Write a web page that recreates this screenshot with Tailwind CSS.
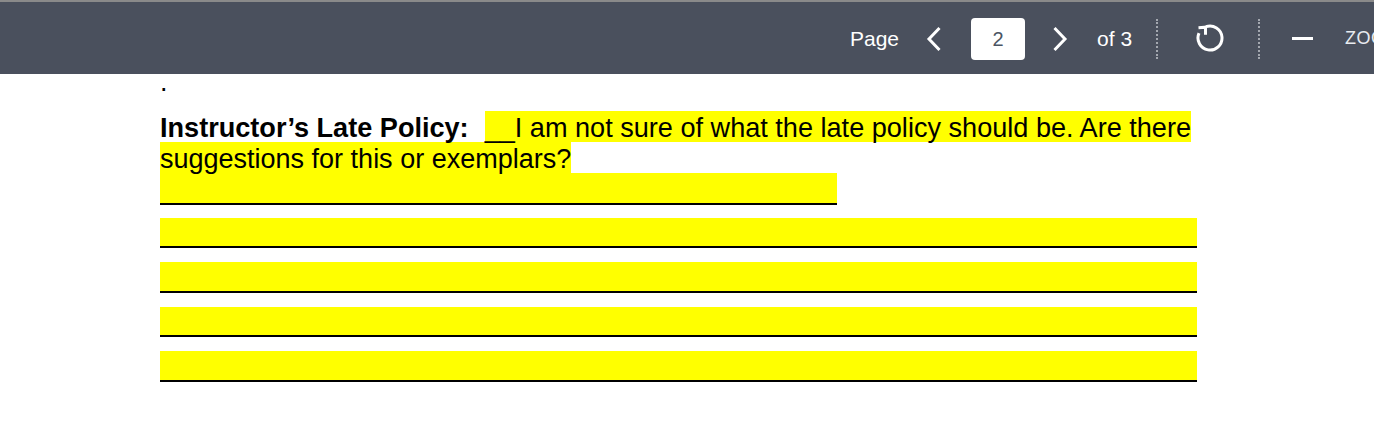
<!DOCTYPE html>
<html>
<head>
<meta charset="utf-8">
<script src="https://cdn.jsdelivr.net/npm/@tailwindcss/browser@4"></script>
</head>
<body class="bg-white w-[1374px] h-[423px] overflow-hidden font-['Liberation_Sans',Arial,sans-serif]">
<header class="h-[74px] bg-[#4a505d] border-t-[2px] border-[#8a8a8a] flex items-center pt-[1px] pl-[850px] text-white overflow-hidden whitespace-nowrap text-[21px]">
  <span class="shrink-0">Page</span>
  <svg class="shrink-0 ml-[27px] w-[16px] h-[26px]" viewBox="0 0 16 26" fill="none" stroke="#fff" stroke-width="3"><path d="M13.5 2 L3 13 L13.5 24"/></svg>
  <div class="shrink-0 ml-[29px] w-[54px] h-[42px] bg-white rounded-[4px] flex items-center justify-center text-[20px] text-[#4b5563]">2</div>
  <svg class="shrink-0 ml-[27px] w-[16px] h-[26px]" viewBox="0 0 16 26" fill="none" stroke="#fff" stroke-width="3"><path d="M2.5 2 L13 13 L2.5 24"/></svg>
  <span class="shrink-0 ml-[29px]">of 3</span>
  <div class="shrink-0 ml-[24px] h-[40px] border-l-[2px] border-dotted border-[#a4a8b0]"></div>
  <svg class="shrink-0 ml-[36.5px] w-[30px] h-[30px]" viewBox="0 1 30 30" fill="none" stroke="#fff" stroke-width="3"><path d="M11 3.7 A12 12 0 1 1 4 10.2"/><path d="M3.5 4.7 L10.5 4.2 L10.5 11.7"/></svg>
  <div class="shrink-0 ml-[33.5px] h-[40px] border-l-[2px] border-dotted border-[#a4a8b0]"></div>
  <div class="shrink-0 ml-[32px] w-[21px] h-[3px] bg-white"></div>
  <span class="shrink-0 ml-[32px] text-[18px] text-[#e8ebf0] tracking-[0.5px]">ZOOM</span>
</header>
<main class="pl-[160px] text-black">
  <p class="mt-[-5.5px] text-[27px] leading-[26px]">.</p>
  <div class="mt-[16.5px] w-[1037px] text-[27.1px] leading-[33px]">
    <div class="relative z-10 whitespace-nowrap h-[31px]"><b>Instructor’s Late Policy:</b><span class="inline-block w-[16px]"></span><span class="bg-[#ffff00] inline-block h-[31px]">__I am not sure of what the late policy should be. Are there</span></div>
    <div class="whitespace-nowrap h-[31px] text-[27px] leading-[35px]"><span class="bg-[#ffff00] inline-block h-[31px]">suggestions for this or exemplars?</span></div>
    <div class="w-[677px] h-[32px] bg-[#ffff00] border-b-[2px] border-black"></div>
  </div>
  <div class="mt-[12.75px] w-[1037px] flex flex-col gap-[14px]">
    <div class="h-[30.5px] bg-[#ffff00] border-b-[2px] border-black"></div>
    <div class="h-[30.5px] bg-[#ffff00] border-b-[2px] border-black"></div>
    <div class="h-[30.5px] bg-[#ffff00] border-b-[2px] border-black"></div>
    <div class="h-[30.5px] bg-[#ffff00] border-b-[2px] border-black"></div>
  </div>
</main>
</body>
</html>
